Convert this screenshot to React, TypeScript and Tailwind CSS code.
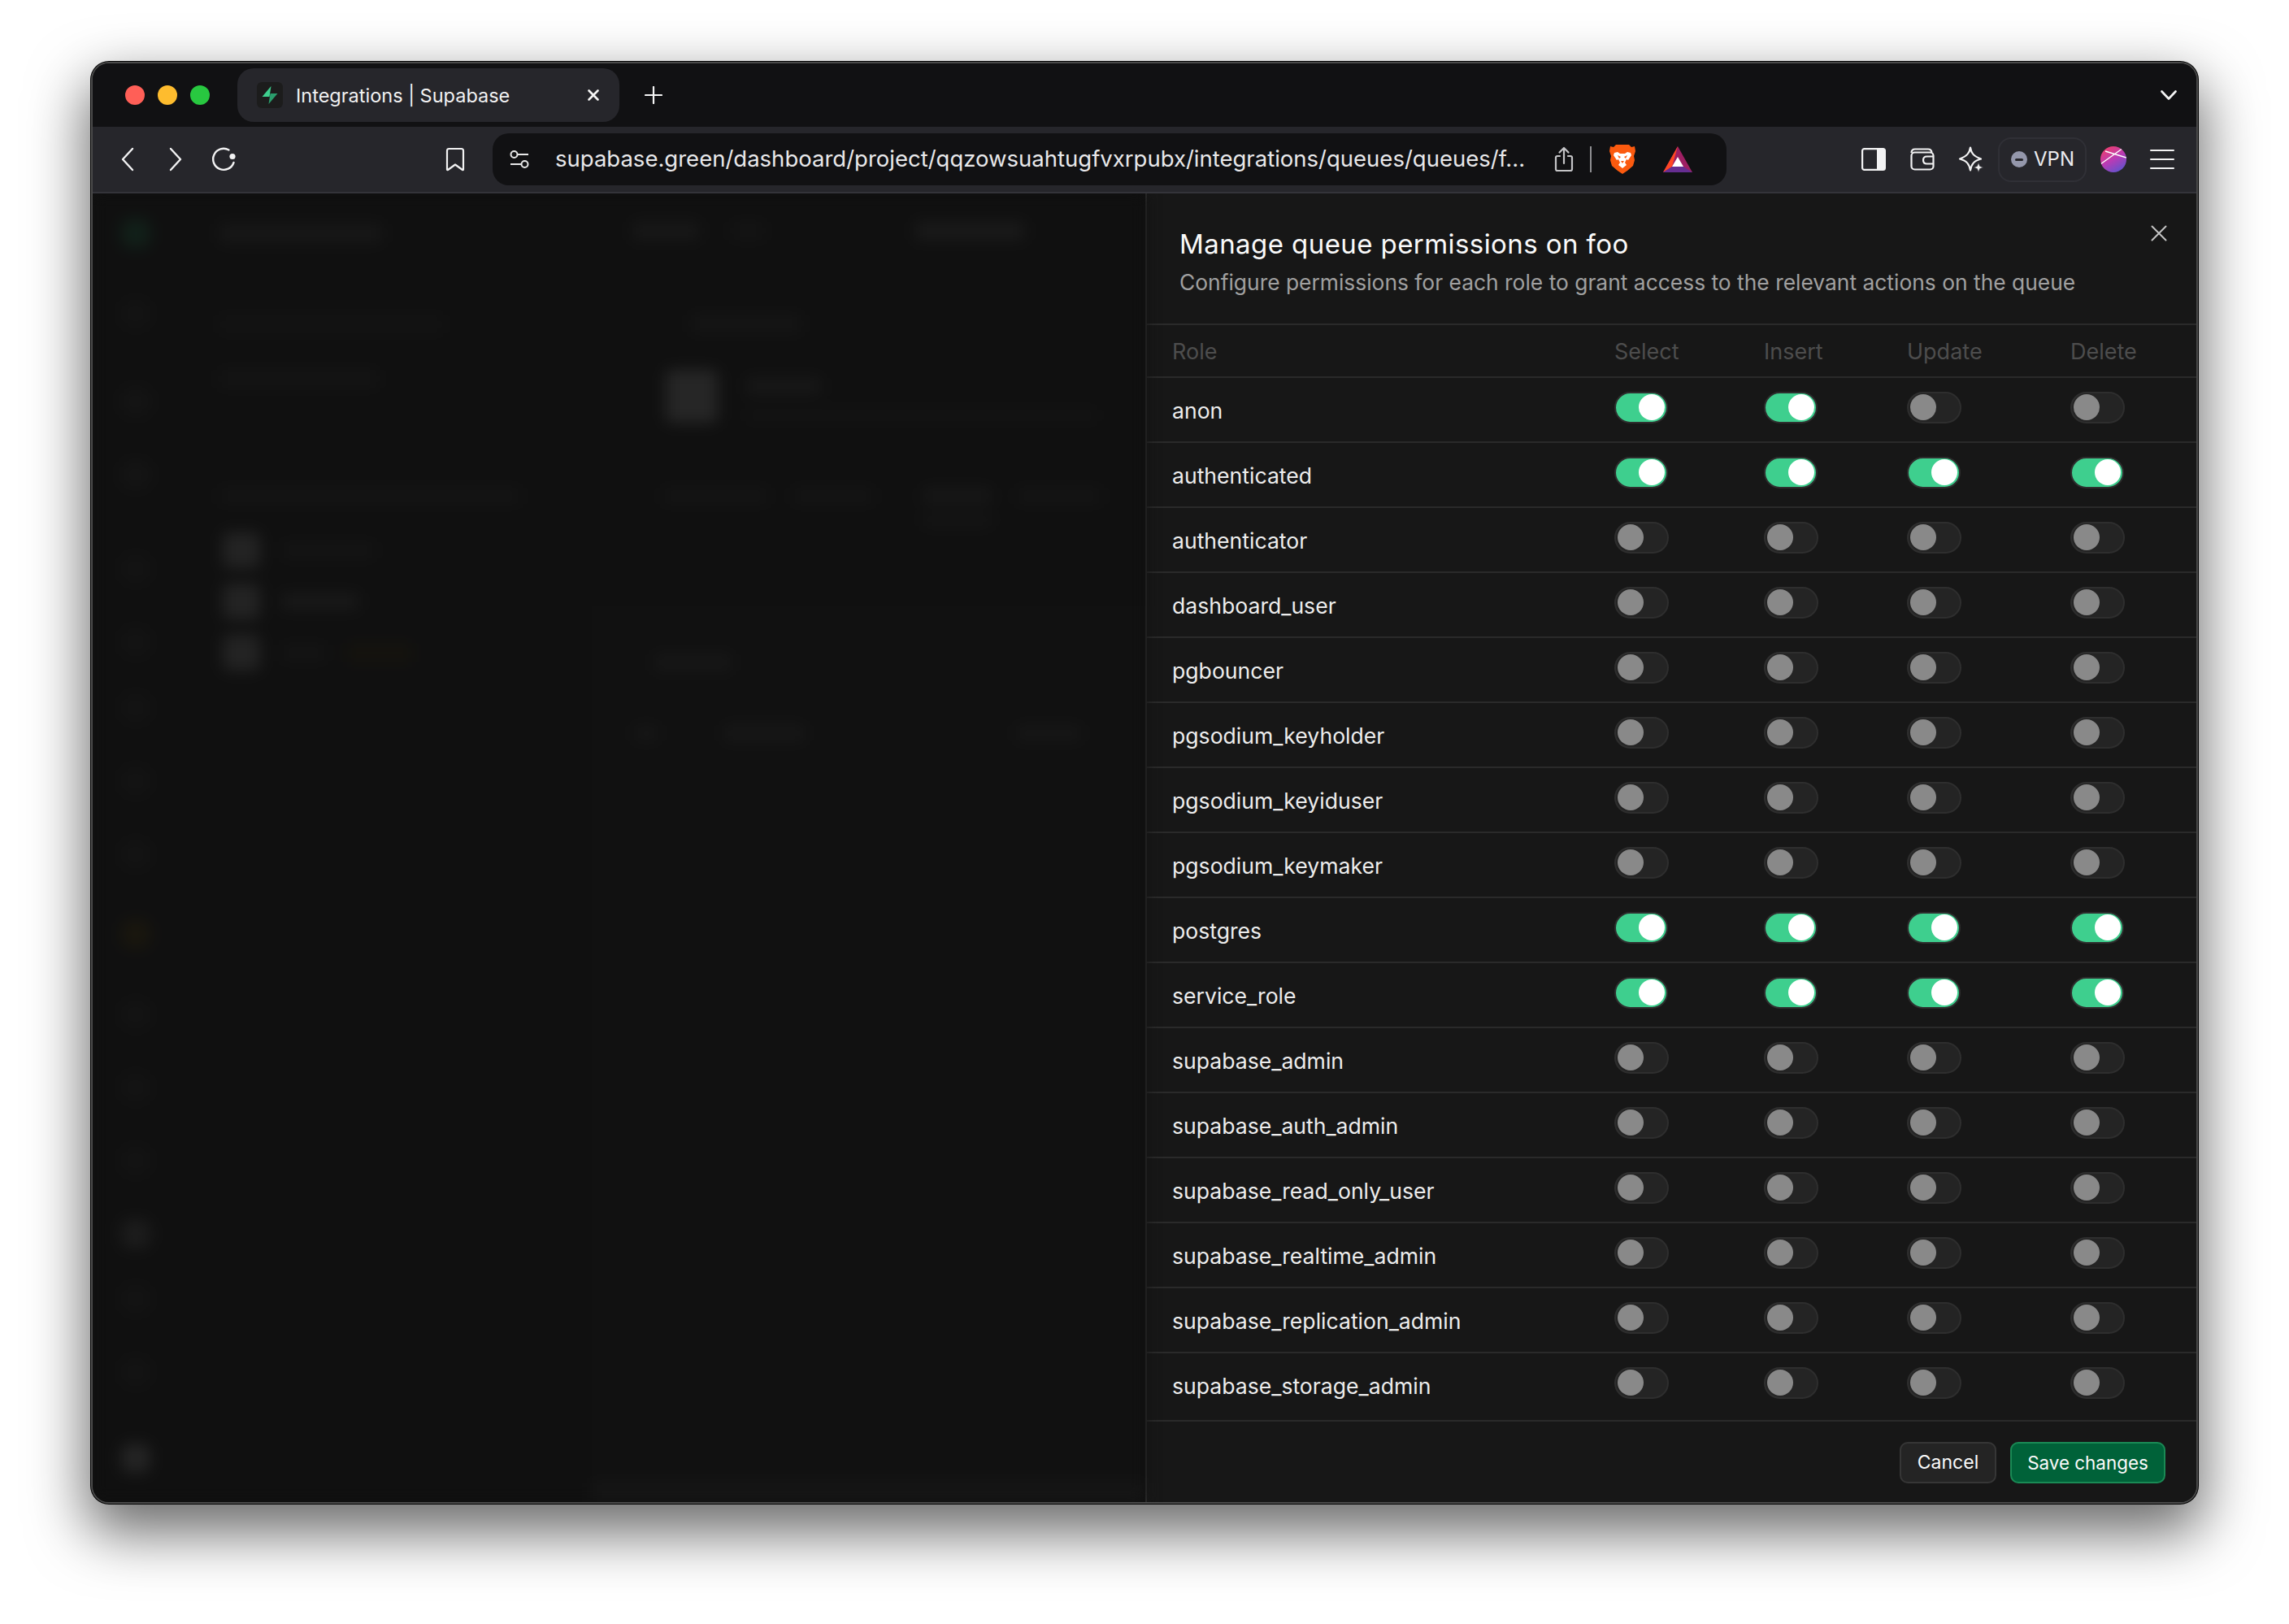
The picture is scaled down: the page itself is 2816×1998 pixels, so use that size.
import React from "react";

const roles: [string, number[]][] = [
  ["anon", [1, 1, 0, 0]],
  ["authenticated", [1, 1, 1, 1]],
  ["authenticator", [0, 0, 0, 0]],
  ["dashboard_user", [0, 0, 0, 0]],
  ["pgbouncer", [0, 0, 0, 0]],
  ["pgsodium_keyholder", [0, 0, 0, 0]],
  ["pgsodium_keyiduser", [0, 0, 0, 0]],
  ["pgsodium_keymaker", [0, 0, 0, 0]],
  ["postgres", [1, 1, 1, 1]],
  ["service_role", [1, 1, 1, 1]],
  ["supabase_admin", [0, 0, 0, 0]],
  ["supabase_auth_admin", [0, 0, 0, 0]],
  ["supabase_read_only_user", [0, 0, 0, 0]],
  ["supabase_realtime_admin", [0, 0, 0, 0]],
  ["supabase_replication_admin", [0, 0, 0, 0]],
  ["supabase_storage_admin", [0, 0, 0, 0]],
];

const cols = "grid grid-cols-[544px_184px_176px_201px_1fr] pl-[31px]";

function Toggle({ on }: { on: boolean }) {
  return on ? (
    <div className="flex h-[39px] w-[66px] items-center justify-end rounded-full border-2 border-[#2e2e2e] bg-[#3ecf8e] pr-[2px]">
      <div className="h-[32px] w-[32px] rounded-full bg-white" />
    </div>
  ) : (
    <div className="flex h-[39px] w-[67px] items-center rounded-full border-2 border-[#2e2e2e] bg-[#242424] pl-[2px]">
      <div className="h-[32px] w-[32px] rounded-full bg-[#898989]" />
    </div>
  );
}

function Row({ name, vals }: { name: string; vals: number[] }) {
  return (
    <div className={`${cols} h-[80px] items-center border-b-2 border-[#2a2a2a] last:h-[84px] last:pb-[4px]`}>
      <div className="pt-[2px] text-[26.6px] leading-[36px] text-[#ededed]">{name}</div>
      {vals.map((v, i) => (
        <div key={i} className="mb-[6px]">
          <Toggle on={v === 1} />
        </div>
      ))}
    </div>
  );
}

const side = [
  "mt-[31px] bg-[#112019]",
  "mt-[63px] bg-[#131313]",
  "mt-[72px] bg-[#141414]",
  "mt-[54px] bg-[#141414]",
  "mt-[80px] bg-[#131313]",
  "mt-[54px] bg-[#131313]",
  "mt-[45px] bg-[#131313]",
  "mt-[54px] bg-[#131313]",
  "mt-[54px] bg-[#131313]",
  "mt-[62px] bg-[#19160e]",
  "mt-[63px] bg-[#131313]",
  "mt-[54px] bg-[#131313]",
  "mt-[54px] bg-[#131313]",
  "mt-[54px] bg-[#1c1c1c]",
  "mt-[44px] bg-[#131313]",
  "mt-[54px] bg-[#131313]",
  "mt-[70px] bg-[#242424]",
];

function Backdrop() {
  return (
    <div className="flex h-full w-[1295px] shrink-0 bg-[#101010] blur-[9px]">
      <div className="flex w-[156px] shrink-0 flex-col items-center pr-[50px]">
        {side.map((c, i) => (
          <div key={i} className={`h-[36px] w-[36px] shrink-0 rounded-xl ${c}`} />
        ))}
      </div>
      <div className="flex w-[458px] shrink-0 flex-col">
        <div className="mt-[37px] h-[24px] w-[200px] rounded bg-[#171717]" />
        <div className="mt-[89px] h-[22px] w-[275px] rounded bg-[#131313]" />
        <div className="mt-[45px] h-[22px] w-[195px] rounded bg-[#141414]" />
        <div className="mt-[123px] h-[20px] w-[370px] rounded bg-[#141414]" />
        <div className="mt-[35px] flex flex-col gap-[19px] pl-[4px]">
          <div className="flex h-[44px] items-center gap-[26px]">
            <div className="h-[44px] w-[46px] rounded-lg bg-[#232323]" />
            <div className="h-[20px] w-[115px] rounded bg-[#141414]" />
          </div>
          <div className="flex h-[44px] items-center gap-[26px]">
            <div className="h-[44px] w-[46px] rounded-lg bg-[#232323]" />
            <div className="h-[20px] w-[95px] rounded bg-[#191919]" />
          </div>
          <div className="flex h-[44px] items-center gap-[26px]">
            <div className="h-[44px] w-[46px] rounded-lg bg-[#232323]" />
            <div className="h-[20px] w-[55px] rounded bg-[#141414]" />
            <div className="h-[24px] w-[80px] rounded bg-[#15130e]" />
          </div>
        </div>
      </div>
      <div className="flex min-w-0 flex-1 flex-col">
        <div className="mt-[35px] flex h-[22px] gap-[40px] pl-[50px]">
          <div className="w-[82px] rounded bg-[#181818]" />
          <div className="w-[40px] rounded bg-[#141414]" />
          <div className="ml-[146px] w-[134px] rounded bg-[#1a1a1a]" />
        </div>
        <div className="ml-[122px] mt-[92px] h-[22px] w-[135px] rounded bg-[#151515]" />
        <div className="ml-[91px] mt-[46px] flex h-[65px] gap-[35px]">
          <div className="h-[65px] w-[64px] rounded-lg bg-[#262626]" />
          <div className="flex flex-col gap-[18px] pt-[10px]">
            <div className="h-[20px] w-[92px] rounded bg-[#181818]" />
            <div className="h-[16px] w-[432px] rounded bg-[#131313]" />
          </div>
        </div>
        <div className="ml-[87px] mt-[80px] flex gap-[30px]">
          <div className="h-[20px] w-[130px] rounded bg-[#141414]" />
          <div className="h-[20px] w-[100px] rounded bg-[#141414]" />
          <div className="ml-[30px] flex w-[85px] flex-col gap-[12px]">
            <div className="h-[20px] rounded bg-[#171717]" />
            <div className="h-[16px] rounded bg-[#151515]" />
          </div>
          <div className="h-[20px] w-[105px] rounded bg-[#141414]" />
        </div>
        <div className="mt-[97px] flex min-h-0 flex-1 flex-col bg-[#111111]">
          <div className="ml-[77px] mt-[60px] h-[20px] w-[95px] rounded bg-[#171717]" />
          <div className="mt-[67px] flex h-[20px] pl-[52px]">
            <div className="w-[30px] rounded bg-[#161616]" />
            <div className="ml-[80px] w-[100px] rounded bg-[#171717]" />
            <div className="ml-[260px] w-[80px] rounded bg-[#161616]" />
          </div>
          <div className="mt-auto h-[24px] bg-[#161616]" />
        </div>
      </div>
    </div>
  );
}

function TabBar() {
  return (
    <div className="flex h-[78px] shrink-0 items-center bg-[#111113] pl-[40px] pr-[24px]">
      <div className="flex gap-[16px]">
        <div className="h-[24px] w-[24px] rounded-full bg-[#ff5f57]" />
        <div className="h-[24px] w-[24px] rounded-full bg-[#febc2e]" />
        <div className="h-[24px] w-[24px] rounded-full bg-[#28c840]" />
      </div>
      <div className="ml-[34px] flex h-[66px] w-[470px] items-center rounded-[20px] bg-[#26262b] pl-[24px] pr-[24px]">
        <div className="flex h-[32px] w-[32px] items-center justify-center rounded-[6px] bg-[#1c1c1c]">
          <svg width="22" height="24" viewBox="0 0 22 24">
            <path d="M12.5 1 L1.5 14 H10.5 Z" fill="#3ecf8e" />
            <path d="M9.5 23 L20.5 10 H11.5 Z" fill="#2a9d6c" />
          </svg>
        </div>
        <span className="ml-[16px] pt-[2px] text-[23.5px] leading-none text-[#f2f2f3]">Integrations | Supabase</span>
        <svg className="ml-auto" width="16" height="16" viewBox="0 0 16 16" stroke="#f5f5f5" strokeWidth="2.6" strokeLinecap="round">
          <path d="M2.5 2.5 13.5 13.5M13.5 2.5 2.5 13.5" />
        </svg>
      </div>
      <svg className="ml-[31px]" width="22" height="22" viewBox="0 0 22 22" stroke="#f5f5f5" strokeWidth="2.2" strokeLinecap="round">
        <path d="M11 1V21M1 11H21" />
      </svg>
      <svg className="ml-auto" width="20" height="12" viewBox="0 0 20 12" fill="none" stroke="#f5f5f5" strokeWidth="2.6" strokeLinecap="round" strokeLinejoin="round">
        <path d="M1.5 1.5 10 10.5 18.5 1.5" />
      </svg>
    </div>
  );
}

function Toolbar() {
  return (
    <div className="flex h-[82px] shrink-0 items-center border-b-2 border-[#34343a] bg-[#26262b]">
      <div className="ml-[23px] flex w-[40px] justify-center">
        <svg width="16" height="30" viewBox="0 0 16 30" fill="none" stroke="#f2f2f3" strokeWidth="2.4" strokeLinecap="round" strokeLinejoin="round">
          <path d="M14 2 2 15 14 28" />
        </svg>
      </div>
      <div className="ml-[19px] flex w-[40px] justify-center">
        <svg width="16" height="30" viewBox="0 0 16 30" fill="none" stroke="#f2f2f3" strokeWidth="2.4" strokeLinecap="round" strokeLinejoin="round">
          <path d="M2 2 14 15 2 28" />
        </svg>
      </div>
      <div className="ml-[19px] flex w-[40px] justify-center">
        <svg width="32" height="32" viewBox="0 0 32 32" fill="none" stroke="#f2f2f3" strokeWidth="2.4" strokeLinecap="round">
          <path d="M22.5 4.5A13 13 0 1 0 28.5 20" />
          <circle cx="27" cy="12.5" r="3.6" fill="#f2f2f3" stroke="none" />
        </svg>
      </div>
      <div className="ml-[245px] flex w-[40px] justify-center">
        <svg width="24" height="30" viewBox="0 0 24 30" fill="none" stroke="#f2f2f3" strokeWidth="2.2" strokeLinejoin="round">
          <path d="M2 4.5Q2 2 4.5 2H19.5Q22 2 22 4.5V27.5Q22 28.5 21 28L12 21.5 3 28Q2 28.5 2 27.5Z" />
        </svg>
      </div>
      <div className="ml-[26px] flex h-[64px] w-[1518px] items-center rounded-[20px] bg-[#111113] pl-[20px]">
        <svg className="shrink-0" width="26" height="24" viewBox="0 0 26 24" fill="none" stroke="#e8e8e8" strokeWidth="2">
          <circle cx="6.5" cy="6" r="4" />
          <path d="M11 6H24M2 18H15" />
          <circle cx="19.5" cy="18" r="4" />
        </svg>
        <div className="ml-[31px] w-[1192px] shrink-0 whitespace-nowrap text-[27.5px] leading-none text-[#e8e8ea]">
          supabase.green/dashboard/project/qqzowsuahtugfvxrpubx/integrations/queues/queues/f...
        </div>
        <div className="ml-[29px] flex w-[40px] justify-center">
          <svg width="24" height="32" viewBox="0 0 24 32" fill="none" stroke="#c4c4c6" strokeWidth="2.2" strokeLinecap="round" strokeLinejoin="round">
            <path d="M7 12H4Q2 12 2 14V28Q2 30 4 30H20Q22 30 22 28V14Q22 12 20 12H17M12 21V2M6.5 7.5 12 2 17.5 7.5" />
          </svg>
        </div>
        <div className="ml-[12px] h-[32px] w-[2px] bg-[#8f8f92]" />
        <div className="ml-[18px] flex w-[40px] justify-center">
          <svg width="32" height="36" viewBox="0 0 32 36">
            <path d="M8 0H24L27 3 31 2 32 8 30 14 31 19 29 26 22 32 16 36 10 32 3 26 1 19 2 14 0 8 1 2 5 3Z" fill="#fb5a0f" />
            <path d="M6 10 10 9 13 11H19L22 9 26 10 27 13 23 19 21 18 19 22 21 25 16 29 11 25 13 22 11 18 9 19 5 13Z" fill="#ffffff" />
            <path d="M10 13 14 15 12 17ZM22 13 18 15 20 17ZM14 20H18L16 23Z" fill="#fb5a0f" />
          </svg>
        </div>
        <div className="ml-[28px] flex w-[40px] justify-center">
          <svg width="36" height="32" viewBox="0 0 36 32">
            <path d="M18 0 36 32H0Z" fill="#9e1f63" />
            <path d="M18 0 0 32 11 25Z" fill="#ff4724" />
            <path d="M0 32H36L25 25H11Z" fill="#662d91" />
            <path d="M18 13 25 25H11Z" fill="#ffffff" />
          </svg>
        </div>
      </div>
      <div className="ml-[161px] flex w-[40px] justify-center">
        <svg width="30" height="28" viewBox="0 0 30 28" fill="none">
          <path d="M19 1H26.5Q29 1 29 3.5V24.5Q29 27 26.5 27H19Z" fill="#f2f2f3" />
          <rect x="1.1" y="1.1" width="27.8" height="25.8" rx="2.4" stroke="#f2f2f3" strokeWidth="2.2" />
        </svg>
      </div>
      <div className="ml-[20px] flex w-[40px] justify-center">
        <svg width="30" height="28" viewBox="0 0 30 28" fill="none" stroke="#f2f2f3" strokeWidth="2.2" strokeLinejoin="round">
          <path d="M1.5 6Q1.5 1.5 6 1.5H22Q26 1.5 26.5 5.5" />
          <rect x="1.5" y="5.5" width="27" height="21" rx="4" />
          <path d="M28.5 10.5H20.5Q16 10.5 16 15T20.5 19.5H28.5" />
        </svg>
      </div>
      <div className="ml-[20px] flex w-[40px] justify-center">
        <svg width="32" height="32" viewBox="0 0 32 32" fill="none">
          <path d="M15 1.5C16 8 18.5 12 28 15.5C19 18 16.5 22 15 29.5C13.5 22 11 18 2 15.5C11 12 14 8 15 1.5Z" stroke="#f2f2f3" strokeWidth="2.2" strokeLinejoin="round" />
          <path d="M25 20 26.6 24.4 31 26 26.6 27.6 25 32 23.4 27.6 19 26 23.4 24.4Z" fill="#f2f2f3" stroke="#26262b" strokeWidth="0.6" />
        </svg>
      </div>
      <div className="ml-[13px] flex h-[55px] w-[109px] items-center rounded-[16px] border-2 border-[#303036] pl-[14px]">
        <div className="flex h-[20px] w-[20px] items-center justify-center rounded-full bg-[#9497ab]">
          <div className="h-[3px] w-[10px] rounded-full bg-[#26262b]" />
        </div>
        <span className="ml-[8px] text-[24px] leading-none text-[#ececef]">VPN</span>
      </div>
      <div className="ml-[17px] h-[32px] w-[32px]">
        <svg width="32" height="32" viewBox="0 0 32 32">
          <defs>
            <linearGradient id="av" x1="0.2" y1="0" x2="0.8" y2="1">
              <stop offset="0" stopColor="#ef3f6b" />
              <stop offset="0.5" stopColor="#b93bb5" />
              <stop offset="1" stopColor="#5a55cf" />
            </linearGradient>
            <clipPath id="avc">
              <circle cx="16" cy="16" r="16" />
            </clipPath>
          </defs>
          <circle cx="16" cy="16" r="16" fill="url(#av)" />
          <path d="M0 22 28 2M6 6 32 14" stroke="#ffffff" strokeWidth="1.4" clipPath="url(#avc)" />
        </svg>
      </div>
      <div className="ml-[29px] flex w-[30px] flex-col gap-[8.5px]">
        <div className="h-[2.5px] rounded-full bg-[#f2f2f3]" />
        <div className="h-[2.5px] rounded-full bg-[#f2f2f3]" />
        <div className="h-[2.5px] rounded-full bg-[#f2f2f3]" />
      </div>
    </div>
  );
}

function Panel() {
  return (
    <div className="flex h-full min-w-0 flex-1 flex-col border-l-2 border-[#2e2e2e] bg-[#171717]">
      <div className="flex h-[162px] shrink-0 flex-col border-b-2 border-[#2a2a2a] pl-[40px] pr-[36px]">
        <div className="mt-[41px] flex items-start justify-between">
          <div className="text-[33px] leading-[42px] tracking-[0.42px] text-[#fafafa]">Manage queue permissions on foo</div>
          <svg className="-mt-[2px]" width="20" height="20" viewBox="0 0 20 20" stroke="#c4c4c4" strokeWidth="2" strokeLinecap="round">
            <path d="M1.5 1.5 18.5 18.5M18.5 1.5 1.5 18.5" />
          </svg>
        </div>
        <div className="mt-[8px] text-[26.4px] leading-[36px] text-[#a0a0a0]">
          Configure permissions for each role to grant access to the relevant actions on the queue
        </div>
      </div>
      <div className={`${cols} h-[65px] shrink-0 items-center border-b-2 border-[#2a2a2a] pt-[3px] text-[27px] text-[#4d4d4d]`}>
        <div>Role</div>
        <div>Select</div>
        <div>Insert</div>
        <div>Update</div>
        <div>Delete</div>
      </div>
      <div className="shrink-0">
        {roles.map(([n, v]) => (
          <Row key={n} name={n} vals={v} />
        ))}
      </div>
      <div className="flex flex-1 items-start justify-end gap-[17px] pr-[38px] pt-[25px]">
        <button className="flex h-[51px] w-[119px] items-center justify-center rounded-[10px] border-2 border-[#363636] bg-[#242424] text-[23px] text-[#fafafa]">
          Cancel
        </button>
        <button className="flex h-[51px] w-[191px] items-center justify-center rounded-[10px] border-2 border-[#1a8a55] bg-[#006239] text-[22.4px] text-[#fafafa]">
          Save changes
        </button>
      </div>
    </div>
  );
}

export default function App() {
  return (
    <div className="h-[1998px] w-[2816px] overflow-hidden bg-white pl-[112px] pt-[76px] [font-family:Inter,sans-serif]">
      <div className="flex h-[1774px] w-[2592px] flex-col overflow-hidden rounded-[22px] border-2 border-[#4a4a4a] bg-[#101010] shadow-[0_0_0_1px_#000,0_30px_70px_6px_rgba(0,0,0,0.58)]">
        <TabBar />
        <Toolbar />
        <div className="flex min-h-0 flex-1 overflow-hidden">
          <Backdrop />
          <Panel />
        </div>
      </div>
    </div>
  );
}
